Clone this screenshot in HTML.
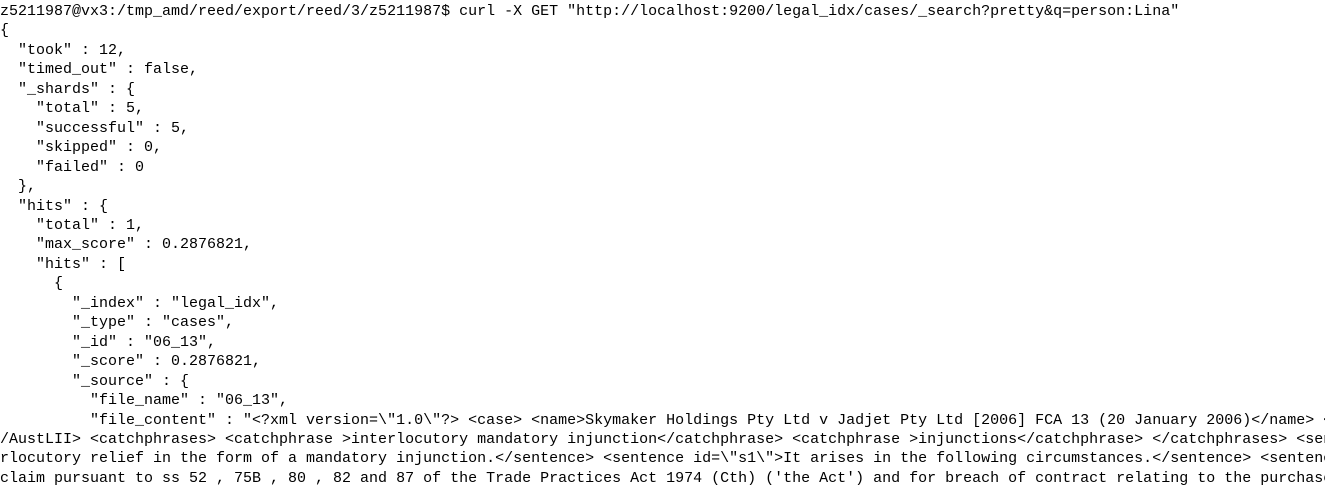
<!DOCTYPE html>
<html><head><meta charset="utf-8"><style>
html,body{margin:0;padding:0;background:#fff;width:1325px;height:490px;overflow:hidden}
pre{margin:0;padding:2px 0 0 0;font-family:"Liberation Mono","DejaVu Sans Mono",monospace;font-size:15px;line-height:19.45px;color:#000;white-space:pre;overflow:hidden;width:1325px}
</style></head><body><pre>z5211987@vx3:/tmp_amd/reed/export/reed/3/z5211987$ curl -X GET "http://localhost:9200/legal_idx/cases/_search?pretty&amp;q=person:Lina"
{
  "took" : 12,
  "timed_out" : false,
  "_shards" : {
    "total" : 5,
    "successful" : 5,
    "skipped" : 0,
    "failed" : 0
  },
  "hits" : {
    "total" : 1,
    "max_score" : 0.2876821,
    "hits" : [
      {
        "_index" : "legal_idx",
        "_type" : "cases",
        "_id" : "06_13",
        "_score" : 0.2876821,
        "_source" : {
          "file_name" : "06_13",
          "file_content" : "&lt;?xml version=\"1.0\"?&gt; &lt;case&gt; &lt;name&gt;Skymaker Holdings Pty Ltd v Jadjet Pty Ltd [2006] FCA 13 (20 January 2006)&lt;/name&gt; &lt;AustLII&gt;
/AustLII&gt; &lt;catchphrases&gt; &lt;catchphrase &gt;interlocutory mandatory injunction&lt;/catchphrase&gt; &lt;catchphrase &gt;injunctions&lt;/catchphrase&gt; &lt;/catchphrases&gt; &lt;sentences&gt;
rlocutory relief in the form of a mandatory injunction.&lt;/sentence&gt; &lt;sentence id=\"s1\"&gt;It arises in the following circumstances.&lt;/sentence&gt; &lt;sentence id=
claim pursuant to ss 52 , 75B , 80 , 82 and 87 of the Trade Practices Act 1974 (Cth) ('the Act') and for breach of contract relating to the purchase</pre></body></html>
